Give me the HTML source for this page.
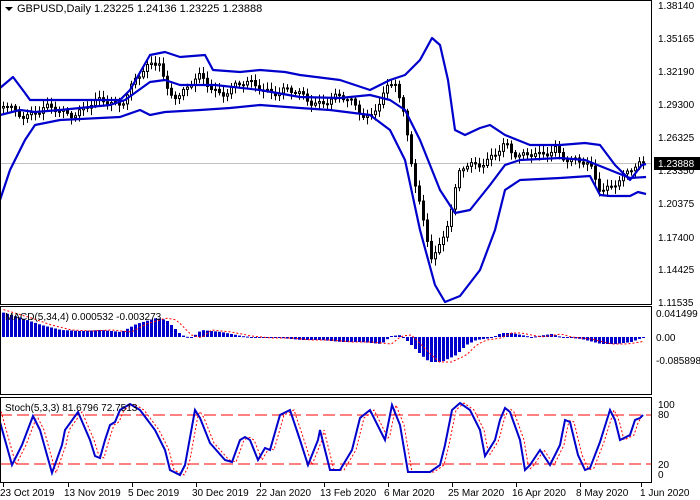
<!DOCTYPE html>
<html><head><meta charset="utf-8"><style>
html,body{margin:0;padding:0;background:#fff;width:700px;height:500px;overflow:hidden}
svg{display:block;font-family:"Liberation Sans",sans-serif}
</style></head><body>
<svg id="s" width="700" height="500" xmlns="http://www.w3.org/2000/svg">
<rect x="0" y="0" width="700" height="500" fill="#fff"/>
<line x1="0" y1="163.5" x2="652" y2="163.5" stroke="#c0c0c0" stroke-width="1"/>
<g id="candles"></g>
<g id="bands"></g>
<g id="macd"></g>
<g id="stoch"></g>
<rect x="0.5" y="0.5" width="651" height="304" fill="none" stroke="#000"/>
<rect x="0.5" y="306.5" width="651" height="88" fill="none" stroke="#000"/>
<rect x="0.5" y="397.5" width="651" height="85" fill="none" stroke="#000"/>
<polygon points="5,7 13,7 9,11" fill="#000"/>
<text x="17" y="12" font-size="11" fill="#000">GBPUSD,Daily  1.23225 1.24136 1.23225 1.23888</text>
<text x="5" y="320" font-size="10" fill="#000">MACD(5,34,4) 0.000532 -0.003273</text>
<text x="5" y="411" font-size="10" fill="#000">Stoch(5,3,3) 81.6796 72.7513</text>
<g font-size="10" fill="#000">
<text x="658" y="9">1.38140</text>
<text x="658" y="42">1.35165</text>
<text x="658" y="75">1.32190</text>
<text x="658" y="108">1.29300</text>
<text x="658" y="141">1.26325</text>
<text x="658" y="174">1.23350</text>
<text x="658" y="207">1.20375</text>
<text x="658" y="241">1.17400</text>
<text x="658" y="273">1.14425</text>
<text x="658" y="306">1.11535</text>
<text x="656" y="317">0.041499</text>
<text x="656" y="341">0.00</text>
<text x="656" y="364">-0.085898</text>
<text x="658" y="408">100</text>
<text x="658" y="418">80</text>
<text x="658" y="468">20</text>
<text x="658" y="478">0</text>
</g>
<rect x="654" y="157" width="46" height="13" fill="#000"/>
<text x="658" y="167" font-size="10" fill="#fff">1.23888</text>
<g font-size="10" fill="#000">
<text x="0" y="496">23 Oct 2019</text>
<text x="64" y="496">13 Nov 2019</text>
<text x="128" y="496">5 Dec 2019</text>
<text x="192" y="496">30 Dec 2019</text>
<text x="256" y="496">22 Jan 2020</text>
<text x="320" y="496">13 Feb 2020</text>
<text x="384" y="496">6 Mar 2020</text>
<text x="448" y="496">25 Mar 2020</text>
<text x="512" y="496">16 Apr 2020</text>
<text x="576" y="496">8 May 2020</text>
<text x="640" y="496">1 Jun 2020</text>
</g>
<g stroke="#000">
<line x1="3.5" y1="483" x2="3.5" y2="487"/><line x1="68.5" y1="483" x2="68.5" y2="487"/><line x1="132.5" y1="483" x2="132.5" y2="487"/><line x1="196.5" y1="483" x2="196.5" y2="487"/><line x1="260.5" y1="483" x2="260.5" y2="487"/><line x1="324.5" y1="483" x2="324.5" y2="487"/><line x1="388.5" y1="483" x2="388.5" y2="487"/><line x1="452.5" y1="483" x2="452.5" y2="487"/><line x1="516.5" y1="483" x2="516.5" y2="487"/><line x1="580.5" y1="483" x2="580.5" y2="487"/><line x1="641.5" y1="483" x2="641.5" y2="487"/>
</g>
</svg>
<script>
(function(){
var NS="http://www.w3.org/2000/svg";
function el(p,t,a){var e=document.createElementNS(NS,t);for(var k in a)e.setAttribute(k,a[k]);p.appendChild(e);return e;}
function interp(pts,x){for(var i=0;i<pts.length-1;i++){if(x<=pts[i+1][0]){var a=pts[i],b=pts[i+1];var t=(x-a[0])/(b[0]-a[0]||1);return a[1]+(b[1]-a[1])*t;}}return pts[pts.length-1][1];}
function pl(pts){return pts.map(function(p){return p[0]+","+p[1]}).join(" ");}
var up=[[0,88],[13,77],[25,93],[30,100],[120,100],[130,90],[150,55],[165,52],[180,57],[205,55],[213,70],[240,72],[260,70],[285,72],[300,75],[340,80],[370,90],[390,80],[405,75],[420,60],[432,38],[440,45],[448,80],[455,130],[465,135],[480,128],[490,125],[505,135],[530,145],[560,145],[585,143],[600,145],[615,165],[630,180],[642,165],[646,164]];
var mid=[[0,115],[20,110],[35,112],[60,110],[90,107],[110,105],[125,100],[150,82],[165,80],[180,85],[215,85],[260,90],[300,97],[340,98],[370,95],[390,100],[405,110],[420,140],[440,190],[455,213],[470,210],[490,185],[505,165],[520,160],[560,158],[585,160],[610,170],[630,178],[646,177]];
var lo=[[0,200],[10,170],[25,140],[35,125],[60,120],[100,118],[120,117],[140,110],[150,115],[165,112],[200,110],[230,108],[260,105],[300,108],[330,110],[370,115],[390,130],[405,160],[420,230],[435,285],[445,302],[460,296],[480,270],[495,230],[505,190],[520,180],[560,178],[590,176],[600,195],[610,196],[630,196],[638,192],[646,194]];
var cp=[[0,108],[30,112],[60,112],[100,105],[120,100],[135,80],[150,70],[160,60],[165,85],[180,95],[200,80],[220,90],[260,85],[290,95],[320,100],[350,102],[370,115],[385,95],[395,85],[405,120],[415,180],[425,230],[432,265],[440,250],[450,215],[460,160],[475,165],[485,170],[495,155],[505,140],[520,155],[540,160],[555,145],[570,160],[590,170],[600,188],[615,180],[625,178],[635,170],[642,165]];
var cg=document.getElementById("candles");var prev=108;
for(var x=3;x<=643;x+=4){var c=interp(cp,x)+Math.sin(x*1.7)*5+Math.sin(x*0.37)*3;var o=prev;var tp=Math.min(o,c),bt=Math.max(o,c);if(bt-tp<1)bt=tp+1;
var h=tp-2-Math.abs(Math.sin(x*2.3))*5,l=bt+2+Math.abs(Math.cos(x*1.9))*5;
el(cg,"line",{x1:x+0.5,y1:h,x2:x+0.5,y2:l,stroke:"#000","stroke-width":"1"});
var bull=c<o;el(cg,"rect",{x:x-0.5,y:tp,width:2,height:bt-tp,fill:bull?"#fff":"#000",stroke:"#000","stroke-width":"1"});prev=c;}
var b=document.getElementById("bands");
[up,mid,lo].forEach(function(p){el(b,"polyline",{points:pl(p),fill:"none",stroke:"#0000cc","stroke-width":"2.2","stroke-linejoin":"round"});});
var mh=[[0,312],[20,318],[40,325],[60,330],[80,331],[100,330],[120,332],[135,324],[155,318],[165,320],[180,335],[190,338],[200,330],[220,332],[240,336],[260,338],[280,338],[300,340],[320,340],[340,342],[360,342],[380,344],[390,336],[400,335],[410,345],[420,355],[428,362],[440,362],[455,355],[465,345],[475,340],[490,338],[500,333],[510,333],[530,337],[550,334],[560,337],[580,339],[600,344],[615,344],[630,342],[643,337]];
var mg=document.getElementById("macd");var sig=[];
for(var x=2;x<=642;x+=4){var v=interp(mh,x);var y0=337;el(mg,"rect",{x:x,y:Math.min(v,y0),width:3,height:Math.max(1,Math.abs(v-y0)),fill:"#0000cc"});sig.push([x+1.5,interp(mh,x-10)]);}
el(mg,"polyline",{points:pl(sig),fill:"none",stroke:"#ff0000","stroke-width":"1","stroke-dasharray":"2,2"});
var st=[[0,422],[12,465],[22,445],[33,416],[40,430],[52,473],[62,445],[65,430],[78,412],[90,440],[95,456],[100,458],[105,440],[110,425],[115,422],[120,410],[130,404],[140,410],[155,430],[165,450],[170,470],[180,475],[185,465],[195,410],[200,418],[210,443],[225,460],[232,462],[240,440],[245,437],[250,440],[258,460],[265,448],[270,450],[280,415],[290,410],[300,440],[308,465],[318,440],[320,430],[330,470],[340,470],[352,450],[360,418],[370,410],[385,440],[392,405],[400,425],[408,472],[430,472],[440,465],[445,445],[452,410],[460,403],[470,410],[480,430],[485,456],[495,440],[500,420],[505,408],[510,412],[520,440],[525,470],[530,465],[540,450],[550,465],[560,445],[565,420],[570,422],[578,455],[585,470],[590,468],[600,442],[610,410],[615,420],[620,440],[630,435],[635,420],[640,418],[643,415]];
var sg=document.getElementById("stoch");
el(sg,"line",{x1:0,y1:415,x2:651,y2:415,stroke:"#ff0000","stroke-dasharray":"12,5"});
el(sg,"line",{x1:0,y1:464,x2:651,y2:464,stroke:"#ff0000","stroke-dasharray":"12,5"});
var ss=[];for(var x=0;x<=643;x+=2){ss.push([x,interp(st,x-4)]);}
el(sg,"polyline",{points:pl(ss),fill:"none",stroke:"#ff0000","stroke-width":"1","stroke-dasharray":"2,2"});
el(sg,"polyline",{points:pl(st),fill:"none",stroke:"#0000cc","stroke-width":"2"});
})();
</script>
</body></html>
